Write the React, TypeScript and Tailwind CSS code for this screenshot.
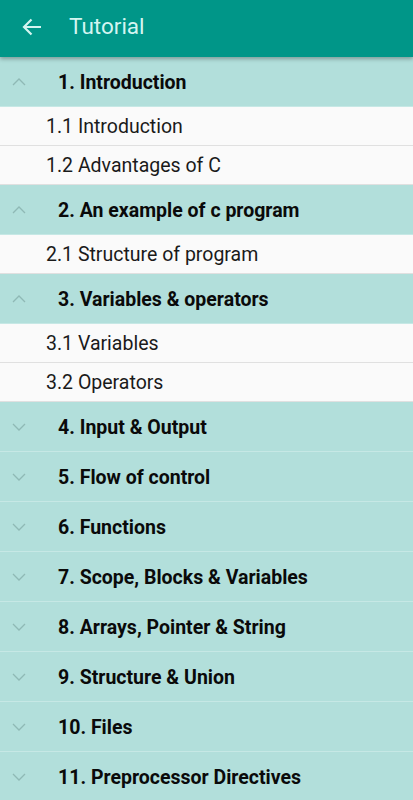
import React from "react";

type Section = { title: string; open: boolean; items: string[] };

const sections: Section[] = [
  { title: "1. Introduction", open: true, items: ["1.1 Introduction", "1.2 Advantages of C"] },
  { title: "2. An example of c program", open: true, items: ["2.1 Structure of program"] },
  { title: "3. Variables & operators", open: true, items: ["3.1 Variables", "3.2 Operators"] },
  { title: "4. Input & Output", open: false, items: [] },
  { title: "5. Flow of control", open: false, items: [] },
  { title: "6. Functions", open: false, items: [] },
  { title: "7. Scope, Blocks & Variables", open: false, items: [] },
  { title: "8. Arrays, Pointer & String", open: false, items: [] },
  { title: "9. Structure & Union", open: false, items: [] },
  { title: "10. Files", open: false, items: [] },
  { title: "11. Preprocessor Directives", open: false, items: [] },
];

function Chevron({ up }: { up: boolean }) {
  return (
    <svg width="16" height="10" viewBox="0 0 16 10" className="shrink-0">
      <path
        d={up ? "M2 8 L8 2 L14 8" : "M2 2 L8 8 L14 2"}
        fill="none"
        stroke="#8fb9b5"
        strokeWidth="1.3"
      />
    </svg>
  );
}

export default function App() {
  return (
    <div className="w-[413px] h-[800px] overflow-hidden bg-[#fafafa] font-['Roboto',sans-serif]">
      <header className="relative z-10 h-[57px] bg-[#009688] flex items-center shadow-[0_2px_4px_rgba(0,0,0,0.3)]">
        <svg width="20" height="18" viewBox="0 0 20 18" className="ml-[22px] -mt-[4px]">
          <path d="M19 9 H2 M9.5 1.5 L2 9 L9.5 16.5" fill="none" stroke="#d4f5f1" strokeWidth="2.2" />
        </svg>
        <h1 className="ml-[27px] -mt-[4px] text-[22.5px] text-[#d4f5f1] leading-none">Tutorial</h1>
      </header>
      <div>
        {sections.map((s) => (
          <div key={s.title}>
            <div className="h-[50px] bg-[#b2dfdb] border-b border-[#c6e8e5] flex items-center">
              <div className="w-[58px] pl-[11px]">
                <Chevron up={s.open} />
              </div>
              <span className="text-[19.5px] font-bold text-[#0a0a0a] pt-[2px]">{s.title}</span>
            </div>
            {s.items.map((it) => (
              <div
                key={it}
                className="h-[39px] bg-[#fafafa] border-b border-[#e0e0e0] flex items-center pl-[46px] pt-[1px] text-[19.5px] text-[#1a1a1a]"
              >
                {it}
              </div>
            ))}
          </div>
        ))}
      </div>
    </div>
  );
}
